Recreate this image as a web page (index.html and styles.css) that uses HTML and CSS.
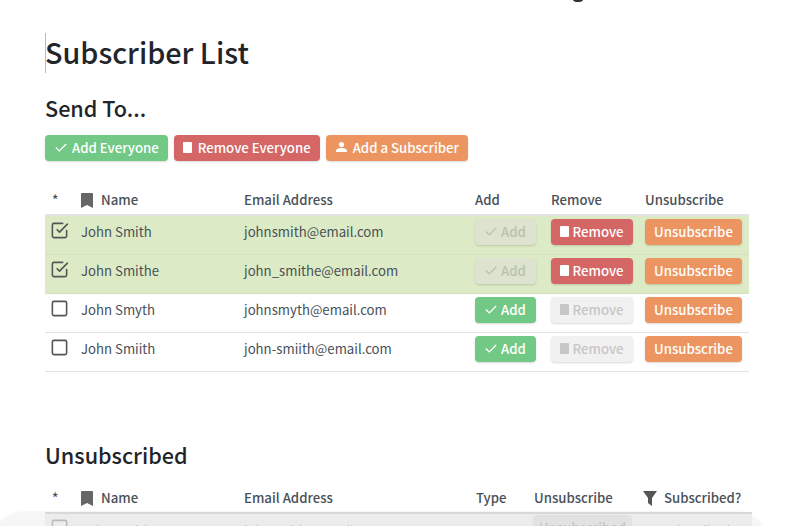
FILE: index.html
```html
<!DOCTYPE html>
<html lang="en">

<head>
    <meta charset="utf-8">
    <title>Subscriber List</title>
    <link rel="stylesheet" href="styles.css">
</head>

<body>
    <!-- blurred page behind, only its edges show at the bottom -->
    <div class="backdrop"></div>
    <div class="top-smudge"></div>
    <main>
        <h1 class="page-title">Subscriber List</h1>

        <h2 class="section-title">Send To...</h2>
        <div class="actions">
            <button class="btn btn-green btn-all">
                <svg class="icon-check" viewBox="0 0 14 10"><path d="M1 5l4 4 8-8"/></svg>Add Everyone
            </button>
            <button class="btn btn-red btn-all"><span class="icon-doc"></span>Remove Everyone</button>
            <button class="btn btn-orange btn-all">
                <svg class="icon-user" viewBox="0 0 12 11"><circle cx="6" cy="2.800" r="2.800"/><path d="M0 11V9.500c0-2 3.500-2.900 6-2.900s6 .9 6 2.900V11z"/></svg>Add a Subscriber
            </button>
        </div>

        <table class="list send-list">
            <thead>
                <tr>
                    <th class="col-star">*</th>
                    <th class="col-name">
                        <svg class="icon-bookmark" viewBox="0 0 12 15"><path d="M0 1q0-1 1-1h10q1 0 1 1v14l-6-3-6 3z"/></svg>Name
                    </th>
                    <th class="col-email">Email Address</th>
                    <th class="col-add">Add</th>
                    <th class="col-remove">Remove</th>
                    <th>Unsubscribe</th>
                </tr>
            </thead>
            <tbody>
                <tr class="selected">
                    <td><svg class="box" viewBox="0 0 24 24"><path d="M9 11l3 3L22 4"/><path d="M21 12v7a2 2 0 0 1-2 2H5a2 2 0 0 1-2-2V5a2 2 0 0 1 2-2h11"/></svg></td>
                    <td>John Smith</td>
                    <td>johnsmith@email.com</td>
                    <td><button class="btn btn-add off"><svg class="icon-check" viewBox="0 0 14 10"><path d="M1 5l4 4 8-8"/></svg>Add</button></td>
                    <td><button class="btn btn-remove"><span class="icon-doc"></span>Remove</button></td>
                    <td><button class="btn btn-orange btn-unsub">Unsubscribe</button></td>
                </tr>
                <tr class="selected">
                    <td><svg class="box" viewBox="0 0 24 24"><path d="M9 11l3 3L22 4"/><path d="M21 12v7a2 2 0 0 1-2 2H5a2 2 0 0 1-2-2V5a2 2 0 0 1 2-2h11"/></svg></td>
                    <td>John Smithe</td>
                    <td>john_smithe@email.com</td>
                    <td><button class="btn btn-add off"><svg class="icon-check" viewBox="0 0 14 10"><path d="M1 5l4 4 8-8"/></svg>Add</button></td>
                    <td><button class="btn btn-remove"><span class="icon-doc"></span>Remove</button></td>
                    <td><button class="btn btn-orange btn-unsub">Unsubscribe</button></td>
                </tr>
                <tr>
                    <td><svg class="box" viewBox="0 0 24 24"><rect x="3" y="3" width="18" height="18" rx="2"/></svg></td>
                    <td>John Smyth</td>
                    <td>johnsmyth@email.com</td>
                    <td><button class="btn btn-add"><svg class="icon-check" viewBox="0 0 14 10"><path d="M1 5l4 4 8-8"/></svg>Add</button></td>
                    <td><button class="btn btn-remove off"><span class="icon-doc"></span>Remove</button></td>
                    <td><button class="btn btn-orange btn-unsub">Unsubscribe</button></td>
                </tr>
                <tr>
                    <td><svg class="box" viewBox="0 0 24 24"><rect x="3" y="3" width="18" height="18" rx="2"/></svg></td>
                    <td>John Smiith</td>
                    <td>john-smiith@email.com</td>
                    <td><button class="btn btn-add"><svg class="icon-check" viewBox="0 0 14 10"><path d="M1 5l4 4 8-8"/></svg>Add</button></td>
                    <td><button class="btn btn-remove off"><span class="icon-doc"></span>Remove</button></td>
                    <td><button class="btn btn-orange btn-unsub">Unsubscribe</button></td>
                </tr>
            </tbody>
        </table>

        <h2 class="section-title unsub-title">Unsubscribed</h2>
        <table class="list unsub-list">
            <thead>
                <tr>
                    <th class="col-star">*</th>
                    <th class="col-name">
                        <svg class="icon-bookmark" viewBox="0 0 12 15"><path d="M0 1q0-1 1-1h10q1 0 1 1v14l-6-3-6 3z"/></svg>Name
                    </th>
                    <th class="col-email">Email Address</th>
                    <th class="col-type">Type</th>
                    <th class="col-unsub">Unsubscribe</th>
                    <th><svg class="icon-filter" viewBox="0 0 14 15"><path d="M0 0h14l-5 7v8l-4-3v-5z"/></svg>Subscribed?</th>
                </tr>
            </thead>
            <tbody>
                <tr>
                    <td><svg class="box" viewBox="0 0 24 24"><rect x="3" y="3" width="18" height="18" rx="2"/></svg></td>
                    <td>John Smith</td>
                    <td>johnsmith@email.com</td>
                    <td></td>
                    <td><button class="btn btn-muted">Unsubscribed</button></td>
                    <td class="cell-subbed">Unsubscribed</td>
                </tr>
            </tbody>
        </table>
    </main>
</body>

</html>
```

FILE: styles.css
```css
body {
    position: relative;
    margin: 0;
    height: 526px;
    overflow: hidden;
    background: #fff;
    color: #212529;
    font-family: "Noto Sans CJK SC", "Noto Sans", sans-serif;
}

main {
    position: relative;
    padding: 33px 0 0 45px;
}

.backdrop {
    position: absolute;
    left: -10px;
    top: 511px;
    width: 780px;
    height: 80px;
    border-radius: 35px;
    background: #f6f6f6;
}

.top-smudge {
    position: absolute;
    left: 573px;
    top: -3px;
    width: 10px;
    height: 5px;
    border-radius: 50%;
    background: #333;
}

.page-title {
    height: 40px;
    margin: 0;
    border-left: 1px solid #bbb;
    font-size: 28.8px;
    font-weight: 500;
    line-height: 38px;
    text-indent: -1px;
}

.section-title {
    margin: 19px 0 0;
    font-size: 21.6px;
    font-weight: 500;
    line-height: 32px;
}

.actions {
    display: flex;
    gap: 6px;
    margin-top: 11px;
}

.btn {
    display: inline-flex;
    align-items: center;
    justify-content: center;
    height: 26px;
    padding: 0 0 2px;
    border: none;
    border-radius: 4px;
    color: #fff;
    font-family: inherit;
    font-size: 13.2px;
    font-weight: 500;
    vertical-align: top;
    box-shadow: 0 1px 2px rgba(0, 0, 0, 0.15);
}

.btn-green, .btn-add {
    background: #72c885;
}

.btn-red, .btn-remove {
    background: #d46666;
}

.btn-orange {
    background: #ec9560;
}

.btn-add.off, .btn-remove.off {
    background: #f1f1f1;
    color: #c6c6c6;
}

.btn-add.off {
    background: #dde3cf;
    color: #b9c2ad;
}

.btn-muted {
    width: 99px;
    margin-left: -1px;
    background: #e2e2e2;
    color: #c4c4c4;
    box-shadow: none;
}

.btn-all {
    gap: 5px;
    padding: 0 9px 2px 10px;
}

.btn-red.btn-all {
    gap: 6px;
    padding-left: 9px;
}

.icon-check {
    width: 12px;
    height: 9px;
    margin-right: 4px;
    fill: none;
    stroke: currentColor;
    stroke-width: 1.500;
}

.btn-all .icon-check {
    margin-right: 0;
}

.icon-doc {
    width: 9px;
    height: 11px;
    margin-right: 3px;
    border-radius: 1px;
    background: currentColor;
}

.btn-all .icon-doc {
    margin-right: 0;
}

.icon-user {
    width: 11px;
    height: 10px;
    margin-right: 1px;
    fill: currentColor;
}

.list {
    width: 704px;
    margin-top: 24px;
    border-collapse: collapse;
    table-layout: fixed;
    font-size: 13.2px;
}

.list th {
    height: 29px;
    padding: 0;
    border-bottom: 2px solid #e2e2e2;
    color: #495057;
    font-weight: 500;
    text-align: left;
}

.list td {
    height: 35px;
    padding: 3px 0 0;
    border-bottom: 1px solid #e2e2e2;
    color: #495057;
    vertical-align: top;
    line-height: 26px;
}

.list tr.selected td {
    background: #dcebc6;
    border-bottom-color: #d3e2bd;
}

.col-star {
    width: 36px;
    padding-left: 7px !important;
    box-sizing: border-box;
}

.col-name {
    width: 163px;
}

.col-email {
    width: 231px;
}

.col-add {
    width: 76px;
}

.col-remove {
    width: 94px;
}

.icon-bookmark {
    width: 12px;
    height: 15px;
    margin-right: 8px;
    vertical-align: -3px;
    fill: #666;
}

.box {
    display: block;
    width: 19px;
    height: 19px;
    margin: 2px 0 0 5px;
    fill: none;
    stroke: #555;
    stroke-width: 2;
    stroke-linecap: round;
    stroke-linejoin: round;
}

.btn-add {
    width: 61px;
}

.btn-remove {
    width: 82px;
}

.btn-unsub {
    width: 97px;
}

.unsub-title {
    margin-top: 67px;
}

.unsub-list {
    width: 707px;
    margin-top: 12px;
}

.unsub-list th {
    border-bottom-color: #d8d8d8;
}

.unsub-list .col-email {
    width: 232px;
}

.unsub-list td {
    padding-top: 1px;
    background: #ececec;
    color: #c4c4c4;
    line-height: 31px;
}

.unsub-list .box {
    margin-top: 3px;
    stroke: #bbb;
}

.cell-subbed {
    padding-left: 2px !important;
}

.col-type {
    width: 58px;
}

.col-unsub {
    width: 109px;
}

.icon-filter {
    width: 14px;
    height: 15px;
    margin-right: 7px;
    vertical-align: -3px;
    fill: #555;
}
```
